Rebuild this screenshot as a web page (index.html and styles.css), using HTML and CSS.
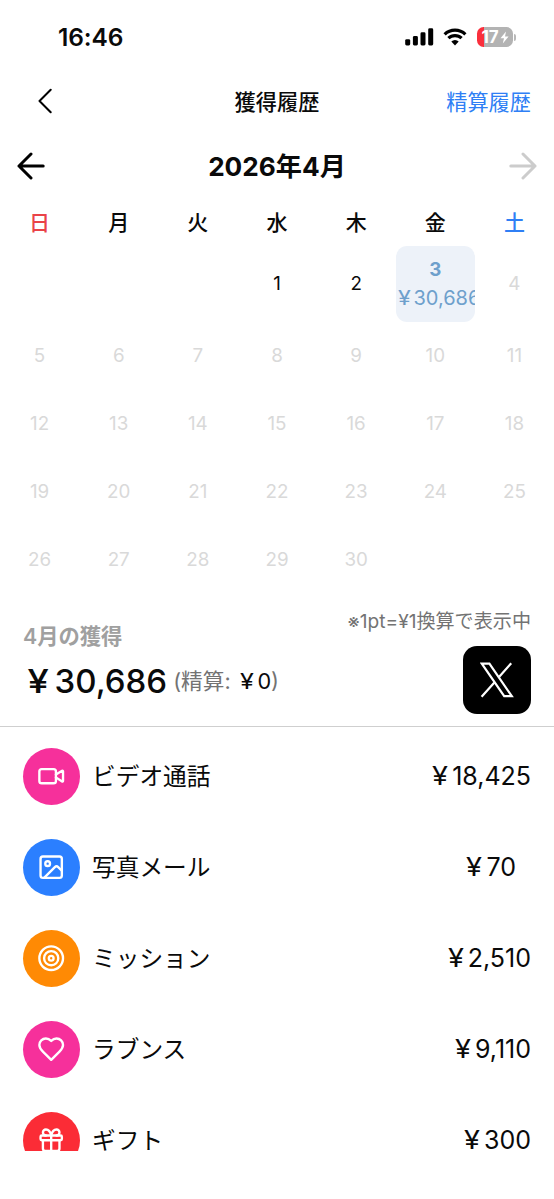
FILE: index.html
```
<!DOCTYPE html>
<html lang="ja">
<head>
<meta charset="utf-8">
<title>獲得履歴</title>
<link rel="stylesheet" href="styles.css">
</head>
<body>
<div class="screen">
  <div class="status">
    <span class="clock">16:46</span>
    <div class="status-icons">
      <svg class="signal" width="29" height="18" viewBox="0 0 29 18"><rect x="0.2" y="11.2" width="5" height="6.3" rx="1.4"/><rect x="7.9" y="8" width="5" height="9.5" rx="1.4"/><rect x="15.5" y="4.3" width="5" height="13.2" rx="1.4"/><rect x="23.2" y="0.3" width="5" height="17.2" rx="1.4"/></svg>
      <svg class="wifi" width="24" height="18" viewBox="0 0 24 18"><path d="M1.6 6.3A15 15 0 0 1 22.4 6.3" /><path d="M5.4 10.2A9.5 9.5 0 0 1 18.6 10.2"/><path class="dot" d="M8.3 13.6a5.3 5.3 0 0 1 7.4 0L12 17.4z"/></svg>
      <div class="battery"><span class="level">17</span><svg width="9" height="13" viewBox="0 0 9 13"><path d="M6 0.5L0.5 7.2H4L2.8 12.5L8.6 5.5H5z"/></svg></div>
      <span class="battery-cap"></span>
    </div>
  </div>

  <header class="nav">
    <svg class="back" width="14" height="26" viewBox="0 0 14 26"><path d="M12.7 1.7L1.5 13L12.7 24.3"/></svg>
    <h1>獲得履歴</h1>
    <a class="nav-link">精算履歴</a>
  </header>

  <div class="month">
    <svg class="arrow" width="28" height="28" viewBox="0 0 28 28"><path d="M14 2L2 14L14 26M2 14H26.2"/></svg>
    <h2>2026年4月</h2>
    <svg class="arrow next" width="28" height="28" viewBox="0 0 28 28"><path d="M14 2L26 14L14 26M26 14H1.8"/></svg>
  </div>

  <div class="week-head"><span class="sun">日</span><span>月</span><span>火</span><span>水</span><span>木</span><span>金</span><span class="sat">土</span></div>
  <div class="calendar">
    <span></span><span></span><span></span><span class="past">1</span><span class="past">2</span>
    <span class="today"><b>3</b><i><span class="yen">¥</span>30,686</i></span><span>4</span>
    <span>5</span><span>6</span><span>7</span><span>8</span><span>9</span><span>10</span><span>11</span>
    <span>12</span><span>13</span><span>14</span><span>15</span><span>16</span><span>17</span><span>18</span>
    <span>19</span><span>20</span><span>21</span><span>22</span><span>23</span><span>24</span><span>25</span>
    <span>26</span><span>27</span><span>28</span><span>29</span><span>30</span>
  </div>

  <section class="summary">
    <div class="earned">
      <div class="earned-title">4月の獲得</div>
      <div class="earned-row"><span class="total"><span class="yen">¥</span>30,686</span><span class="settled">(精算: <em><span class="yen">¥</span>0</em>)</span></div>
    </div>
    <div class="share">
      <div class="note">※1pt=¥1換算で表示中</div>
      <div class="x-button"><svg width="34" height="36" viewBox="0 0 34 36"><path d="M1.8 1.6H9.4L31.8 34.2H24.2z"/><path d="M31.2 1.2L18.8 15.2M14.6 20.2L1.6 34.8"/></svg></div>
    </div>
  </section>

  <div class="list">
    <div class="item">
      <div class="badge pink"><svg viewBox="0 0 24 24"><path d="m16 13 5.223 3.482a.5.5 0 0 0 .777-.416V7.87a.5.5 0 0 0-.752-.432L16 10.5"/><rect x="2" y="6" width="14" height="12" rx="2"/></svg></div>
      <span class="name">ビデオ通話</span><span class="amount"><span class="yen">¥</span>18,425</span>
    </div>
    <div class="item">
      <div class="badge blue"><svg viewBox="0 0 24 24"><rect x="3" y="3" width="18" height="18" rx="2"/><circle cx="9" cy="9" r="2"/><path d="m21 15-3.086-3.086a2 2 0 0 0-2.828 0L6 21"/></svg></div>
      <span class="name">写真メール</span><span class="amount inset"><span class="yen">¥</span>70</span>
    </div>
    <div class="item">
      <div class="badge orange"><svg viewBox="0 0 24 24"><circle cx="12" cy="12" r="10"/><circle cx="12" cy="12" r="6"/><circle cx="12" cy="12" r="2"/></svg></div>
      <span class="name">ミッション</span><span class="amount"><span class="yen">¥</span>2,510</span>
    </div>
    <div class="item">
      <div class="badge pink"><svg viewBox="0 0 24 24"><path d="M19 14c1.49-1.46 3-3.21 3-5.5A5.5 5.5 0 0 0 16.5 3c-1.76 0-3 .5-4.5 2-1.5-1.5-2.74-2-4.5-2A5.5 5.5 0 0 0 2 8.5c0 2.3 1.5 4.050 3 5.5l7 7Z"/></svg></div>
      <span class="name">ラブンス</span><span class="amount"><span class="yen">¥</span>9,110</span>
    </div>
    <div class="item">
      <div class="badge red"><svg viewBox="0 0 24 24"><rect x="3" y="8" width="18" height="4" rx="1"/><path d="M12 8v13M19 12v7a2 2 0 0 1-2 2H7a2 2 0 0 1-2-2v-7M7.5 8a2.5 2.5 0 0 1 0-5A4.8 8 0 0 1 12 8a4.8 8 0 0 1 4.5-5 2.5 2.5 0 0 1 0 5"/></svg></div>
      <span class="name">ギフト</span><span class="amount"><span class="yen">¥</span>300</span>
    </div>
  </div>
</div>
</body>
</html>
```
FILE: styles.css
```
* { box-sizing: border-box; }
body { margin: 0; background: #fff; }
h1, h2 { margin: 0; }
.screen {
  width: 554px; height: 1199px; overflow: hidden;
  display: flex; flex-direction: column;
  font-family: Inter, "Noto Sans CJK JP", sans-serif; color: #0a0a0a;
  white-space: nowrap;
}
svg { display: block; fill: none; flex: none; }
.yen { display: inline-block; transform: scaleX(1.16); margin: 0 0.22em 0 0.18em; }

.status { height: 74px; padding: 0 38px 0 58px; display: flex; align-items: center; justify-content: space-between; }
.clock { font-size: 24.5px; font-weight: 600; letter-spacing: -0.1px; }
.status-icons { display: flex; align-items: center; }
.signal { fill: #000; margin-right: 9px; }
.wifi { stroke: #000; stroke-width: 3.2; margin-right: 10px; }
.wifi .dot { fill: #000; stroke: none; }
.battery {
  width: 36px; height: 20px; border-radius: 6.5px;
  background: linear-gradient(90deg, #fa2f3c 6.5px, #b3b3b3 6.5px);
  display: flex; align-items: center; justify-content: center; gap: 1px;
}
.battery svg { fill: #fff; }
.level { font-size: 17px; font-weight: 700; line-height: 20px; color: #fff; }
.battery-cap { width: 2px; height: 7px; margin-left: 1px; border-radius: 0 2px 2px 0; background: #b8b8b8; }

.nav { height: 54px; padding: 0 23px; display: grid; grid-template-columns: 100px 1fr 100px; align-items: center; }
.back { margin-left: 15px; stroke: #000; stroke-width: 2; stroke-linecap: round; stroke-linejoin: round; }
.nav h1 { font-size: 21.2px; font-weight: 500; text-align: center; padding-bottom: 2px; }
.nav-link { font-size: 21.2px; color: #2f7ff5; text-align: right; padding-bottom: 2px; }

.month { height: 75px; padding: 1px 17px 0; display: flex; align-items: center; justify-content: space-between; }
.arrow { stroke: #000; stroke-width: 3; stroke-linecap: round; stroke-linejoin: round; }
.next { stroke: #ccc; }
.month h2 { font-size: 26.2px; font-weight: 700; padding-bottom: 2px; }

.week-head, .calendar { display: grid; grid-template-columns: repeat(7, 1fr); }
.week-head { height: 43px; text-align: center; font-size: 21px; font-weight: 500; line-height: 39px; }
.sun { color: #ea4348; }
.sat { color: #2f7ff5; }
.calendar { grid-template-rows: 76px repeat(4, 68px); font-size: 18.8px; color: #d9d9d9; }
.calendar > span { min-width: 0; line-height: 24px; display: flex; flex-direction: column; align-items: center; justify-content: center; overflow: hidden; }
.calendar .past { color: #0a0a0a; padding-bottom: 1px; }
.calendar .today { background: #edf2f9; border-radius: 11px; color: #6ea0cc; align-items: flex-start; padding-bottom: 1px; }
.today b { width: 100%; text-align: center; line-height: 28px; }
.today i { font-style: normal; font-size: 20px; line-height: 28px; }
.today .yen { margin: 0 0.2em 0 0.14em; }

.summary { height: 133px; padding: 0 23px; display: flex; justify-content: space-between; border-bottom: 1.5px solid #cfcfcf; }
.earned-title { margin-top: 26px; font-size: 21.3px; line-height: 32px; font-weight: 600; color: #a0a0a0; }
.earned-row { display: flex; align-items: center; height: 58px; }
.total { font-size: 33px; font-weight: 500; line-height: 56px; }
.settled { margin-left: 6px; font-size: 21.7px; line-height: 56px; color: #737373; }
.settled em { font-style: normal; color: #0a0a0a; }
.share { display: flex; flex-direction: column; align-items: flex-end; }
.note { margin-top: 13px; font-size: 19.1px; line-height: 28px; color: #737373; }
.x-button { width: 68px; height: 68px; margin-top: 11px; border-radius: 14px; background: #000; display: flex; align-items: center; justify-content: center; }
.x-button svg { stroke: #fff; stroke-width: 2.2; }

.list { height: 424px; padding: 4px 23px 0; }
.item { height: 91px; display: flex; align-items: center; line-height: 24px; }
.badge { width: 57px; height: 57px; border-radius: 50%; margin-right: 12px; display: flex; align-items: center; justify-content: center; }
.item:last-child .badge { clip-path: inset(0 0 18px 0); }
.badge svg { width: 28.4px; height: 28.4px; stroke: #fff; stroke-width: 2; stroke-linecap: round; stroke-linejoin: round; }
.pink { background: #f6309b; }
.blue { background: #2b7fff; }
.orange { background: #ff8a04; }
.red { background: #fb2c36; }
.name { font-size: 23.7px; }
.amount { margin-left: auto; font-size: 25px; padding-bottom: 2px; }
.inset { margin-right: 15px; }
```
